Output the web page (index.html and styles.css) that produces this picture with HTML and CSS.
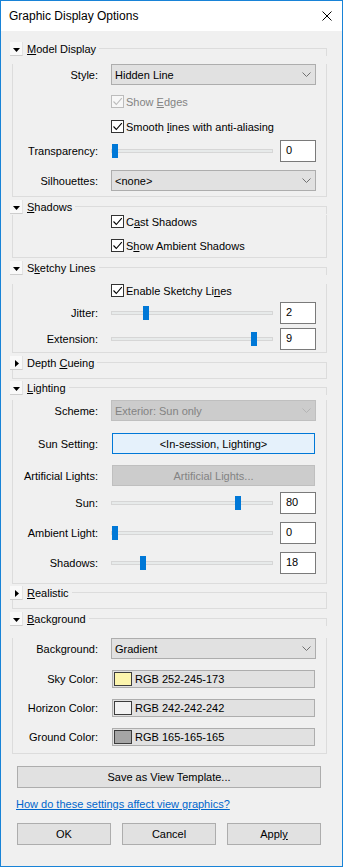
FILE: index.html
```html
<!DOCTYPE html>
<html>
<head>
<meta charset="utf-8">
<title>Graphic Display Options</title>
<link rel="stylesheet" href="styles.css">
</head>
<body>
<div class="window">
  <div class="titlebar">
    <span class="title">Graphic Display Options</span>
    <svg class="close" width="10" height="10" viewBox="0 0 10 10"><path d="M0.5 0.5L9.5 9.5M9.5 0.5L0.5 9.5" stroke="#000" stroke-width="1" fill="none"/></svg>
  </div>
  <div class="content">

    <section class="group">
      <div class="ghead">
        <span class="toggle"><svg width="13" height="14" viewBox="0 0 13 14"><path d="M4 6h7l-3.5 4z" fill="#000"/></svg></span>
        <span class="gtitle"><u>M</u>odel Display</span><span class="gline"></span>
      </div>
      <div class="gbody b-model">
        <div class="row r-style">
          <span class="lbl">Style:</span>
          <div class="combo"><span>Hidden Line</span><svg width="9" height="5" viewBox="0 0 9 5"><path d="M0.5 0.5L4.5 4.5L8.5 0.5" stroke="#707070" fill="none"/></svg></div>
        </div>
        <div class="row r-edges">
          <span class="lbl"></span>
          <div class="check disabled"><span class="cb"><svg width="11" height="11" viewBox="0 0 11 11"><path d="M1.5 5.5L4.3 8.5L9.8 2.2" stroke="#bcbcbc" stroke-width="1.1" fill="none"/></svg></span><span>Show <u>E</u>dges</span></div>
        </div>
        <div class="row r-smooth">
          <span class="lbl"></span>
          <div class="check"><span class="cb"><svg width="11" height="11" viewBox="0 0 11 11"><path d="M1.5 5.5L4.3 8.5L9.8 2.2" stroke="#000" stroke-width="1.1" fill="none"/></svg></span><span>Smooth <u>l</u>ines with anti-aliasing</span></div>
        </div>
        <div class="row r-transp">
          <span class="lbl">Transparency:</span>
          <div class="sliderctl"><div class="slider"><span class="track"></span><span class="thumb" style="left:1px"></span></div><span class="num">0</span></div>
        </div>
        <div class="row r-silh">
          <span class="lbl">Silhouettes:</span>
          <div class="combo"><span>&lt;none&gt;</span><svg width="9" height="5" viewBox="0 0 9 5"><path d="M0.5 0.5L4.5 4.5L8.5 0.5" stroke="#707070" fill="none"/></svg></div>
        </div>
      </div>
    </section>

    <section class="group">
      <div class="ghead">
        <span class="toggle"><svg width="13" height="14" viewBox="0 0 13 14"><path d="M4 6h7l-3.5 4z" fill="#000"/></svg></span>
        <span class="gtitle"><u>S</u>hadows</span><span class="gline"></span>
      </div>
      <div class="gbody b-shadows">
        <div class="row r-cast">
          <span class="lbl"></span>
          <div class="check"><span class="cb"><svg width="11" height="11" viewBox="0 0 11 11"><path d="M1.5 5.5L4.3 8.5L9.8 2.2" stroke="#000" stroke-width="1.1" fill="none"/></svg></span><span>C<u>a</u>st Shadows</span></div>
        </div>
        <div class="row r-amb">
          <span class="lbl"></span>
          <div class="check"><span class="cb"><svg width="11" height="11" viewBox="0 0 11 11"><path d="M1.5 5.5L4.3 8.5L9.8 2.2" stroke="#000" stroke-width="1.1" fill="none"/></svg></span><span>S<u>h</u>ow Ambient Shadows</span></div>
        </div>
      </div>
    </section>

    <section class="group">
      <div class="ghead">
        <span class="toggle"><svg width="13" height="14" viewBox="0 0 13 14"><path d="M4 6h7l-3.5 4z" fill="#000"/></svg></span>
        <span class="gtitle">S<u>k</u>etchy Lines</span><span class="gline"></span>
      </div>
      <div class="gbody b-sketchy">
        <div class="row r-enable">
          <span class="lbl"></span>
          <div class="check"><span class="cb"><svg width="11" height="11" viewBox="0 0 11 11"><path d="M1.5 5.5L4.3 8.5L9.8 2.2" stroke="#000" stroke-width="1.1" fill="none"/></svg></span><span>Enable Sketchy Li<u>n</u>es</span></div>
        </div>
        <div class="row r-jitter">
          <span class="lbl">Jitter:</span>
          <div class="sliderctl"><div class="slider"><span class="track"></span><span class="thumb" style="left:32px"></span></div><span class="num">2</span></div>
        </div>
        <div class="row r-ext">
          <span class="lbl">Extension:</span>
          <div class="sliderctl"><div class="slider"><span class="track"></span><span class="thumb" style="left:140px"></span></div><span class="num">9</span></div>
        </div>
      </div>
    </section>

    <section class="group">
      <div class="ghead">
        <span class="toggle"><svg width="13" height="14" viewBox="0 0 13 14"><path d="M6 4v7l4-3.5z" fill="#000"/></svg></span>
        <span class="gtitle">Depth <u>C</u>ueing</span><span class="gline"></span>
      </div>
      <div class="gbody collapsed"></div>
    </section>

    <section class="group tight">
      <div class="ghead">
        <span class="toggle"><svg width="13" height="14" viewBox="0 0 13 14"><path d="M4 6h7l-3.5 4z" fill="#000"/></svg></span>
        <span class="gtitle"><u>L</u>ighting</span><span class="gline"></span>
      </div>
      <div class="gbody b-lighting">
        <div class="row r-scheme">
          <span class="lbl">Scheme:</span>
          <div class="combo disabled"><span>Exterior: Sun only</span><svg width="9" height="5" viewBox="0 0 9 5"><path d="M0.5 0.5L4.5 4.5L8.5 0.5" stroke="#b4b4b4" fill="none"/></svg></div>
        </div>
        <div class="row r-sunset">
          <span class="lbl">Sun Setting:</span>
          <div class="btn focus">&lt;In-session, Lighting&gt;</div>
        </div>
        <div class="row r-art">
          <span class="lbl">Artificial Lights:</span>
          <div class="btn disabled">Artificial Lights...</div>
        </div>
        <div class="row r-sun">
          <span class="lbl">Sun:</span>
          <div class="sliderctl"><div class="slider"><span class="track"></span><span class="thumb" style="left:124px"></span></div><span class="num">80</span></div>
        </div>
        <div class="row r-ambl">
          <span class="lbl">Ambient Light:</span>
          <div class="sliderctl"><div class="slider"><span class="track"></span><span class="thumb" style="left:1px"></span></div><span class="num">0</span></div>
        </div>
        <div class="row r-shd">
          <span class="lbl">Shadows:</span>
          <div class="sliderctl"><div class="slider"><span class="track"></span><span class="thumb" style="left:29px"></span></div><span class="num">18</span></div>
        </div>
      </div>
    </section>

    <section class="group tight">
      <div class="ghead">
        <span class="toggle"><svg width="13" height="14" viewBox="0 0 13 14"><path d="M6 4v7l4-3.5z" fill="#000"/></svg></span>
        <span class="gtitle"><u>R</u>ealistic</span><span class="gline"></span>
      </div>
      <div class="gbody collapsed"></div>
    </section>

    <section class="group">
      <div class="ghead">
        <span class="toggle"><svg width="13" height="14" viewBox="0 0 13 14"><path d="M4 6h7l-3.5 4z" fill="#000"/></svg></span>
        <span class="gtitle"><u>B</u>ackground</span><span class="gline"></span>
      </div>
      <div class="gbody b-bg">
        <div class="row r-bgcombo">
          <span class="lbl">Background:</span>
          <div class="combo"><span>Gradient</span><svg width="9" height="5" viewBox="0 0 9 5"><path d="M0.5 0.5L4.5 4.5L8.5 0.5" stroke="#707070" fill="none"/></svg></div>
        </div>
        <div class="row r-sky">
          <span class="lbl">Sky Color:</span>
          <div class="colorfield"><span class="swatch sky"></span><span>RGB 252-245-173</span></div>
        </div>
        <div class="row r-hor">
          <span class="lbl">Horizon Color:</span>
          <div class="colorfield"><span class="swatch horizon"></span><span>RGB 242-242-242</span></div>
        </div>
        <div class="row r-gnd">
          <span class="lbl">Ground Color:</span>
          <div class="colorfield"><span class="swatch ground"></span><span>RGB 165-165-165</span></div>
        </div>
      </div>
    </section>

    <div class="btn wide">Save as View Template...</div>
    <a class="help" href="#">How do these settings affect view graphics?</a>
    <div class="actions">
      <div class="btn">OK</div>
      <div class="btn">Cancel</div>
      <div class="btn">Appl<u>y</u></div>
    </div>
  </div>
</div>
</body>
</html>
```

FILE: styles.css
```css
* { box-sizing: border-box; }
html, body { margin: 0; padding: 0; background: #fff; }
body {
  font-family: "Liberation Sans", Arial, sans-serif;
  font-size: 11px;
  color: #000;
}
u { text-decoration: underline; text-underline-offset: 1px; }

.window {
  width: 343px;
  height: 867px;
  border: 1px solid #1883d7;
  background: #f0f0f0;
  display: flex;
  flex-direction: column;
}
.titlebar {
  height: 30px;
  flex: none;
  background: #fff;
  display: flex;
  align-items: center;
  justify-content: space-between;
  padding: 0 10px 0 8px;
}
.title { font-size: 12px; }
.close { display: block; }

.content {
  padding: 11px 15px 0 9px;
}

/* group boxes */
.group + .group { margin-top: 3px; }
.group.tight { margin-top: 2px; }
.ghead {
  display: flex;
  height: 14px;
}
.toggle {
  flex: none;
  width: 13px;
  height: 14px;
  background: #f9f9f9;
  border-right: 1px solid #e3e3e3;
  border-bottom: 1px solid #cdcdcd;
}
.toggle svg { display: block; margin-left: -1px; }
.gtitle {
  margin-left: 4px;
  line-height: 14px;
  white-space: nowrap;
}
.gline {
  flex: 1;
  margin-left: 3px;
  margin-top: 6px;
  border-top: 1px solid #dcdcdc;
  border-right: 1px solid #dcdcdc;
}
.gbody {
  margin-left: 2px;
  border: 1px solid #dcdcdc;
  border-top: none;
}
.gbody.collapsed { height: 9px; }
.b-model { padding-bottom: 5px; }
.b-shadows { padding-bottom: 5px; }
.b-sketchy { padding-bottom: 2px; }
.b-lighting { padding-bottom: 9px; }
.b-bg { padding-bottom: 7px; }

/* rows */
.row {
  display: grid;
  grid-template-columns: 85px 205px;
  column-gap: 13px;
  align-items: center;
}
.lbl {
  text-align: right;
  white-space: nowrap;
  line-height: 14px;
}
.r-style { margin-top: 8px; height: 21px; }
.r-edges { margin-top: 10px; height: 13px; }
.r-smooth { margin-top: 12px; height: 13px; }
.r-transp { margin-top: 7px; height: 22px; }
.r-silh { margin-top: 8px; height: 21px; }
.r-cast { margin-top: 1px; height: 13px; }
.r-amb { margin-top: 11px; height: 13px; }
.r-enable { margin-top: 9px; height: 13px; }
.r-jitter { margin-top: 5px; height: 22px; }
.r-ext { margin-top: 4px; height: 22px; }
.r-scheme { margin-top: 5px; height: 21px; }
.r-sunset { margin-top: 12px; height: 21px; }
.r-art { margin-top: 11px; height: 21px; }
.r-sun { margin-top: 6px; height: 22px; }
.r-ambl { margin-top: 8px; height: 22px; }
.r-shd { margin-top: 8px; height: 22px; }
.r-bgcombo { margin-top: 12px; height: 21px; }
.r-sky { margin-top: 11px; height: 18px; }
.r-hor { margin-top: 11px; height: 18px; }
.r-gnd { margin-top: 11px; height: 18px; }

/* combo box */
.combo {
  height: 21px;
  background: #e1e1e1;
  border: 1px solid #adadad;
  display: flex;
  align-items: center;
  justify-content: space-between;
  padding: 0 4px 0 3px;
}
.combo svg { display: block; }
.combo.disabled {
  background: #cccccc;
  border-color: #bfbfbf;
  color: #838383;
}

/* checkbox */
.check {
  display: flex;
  align-items: center;
  height: 13px;
  white-space: nowrap;
}
.cb {
  flex: none;
  width: 13px;
  height: 13px;
  border: 1px solid #333;
  background: #fff;
  margin-right: 2px;
}
.cb svg { display: block; }
.check.disabled { color: #838383; }
.check.disabled .cb { border-color: #bcbcbc; background: #f7f7f7; }

/* slider */
.sliderctl {
  display: flex;
  align-items: center;
  height: 22px;
}
.slider {
  position: relative;
  width: 161px;
  height: 22px;
  flex: none;
}
.track {
  position: absolute;
  left: 0;
  right: -1px;
  top: 9px;
  height: 4px;
  background: #e7eaea;
  border: 1px solid #d6d6d6;
}
.thumb {
  position: absolute;
  top: 4px;
  width: 6px;
  height: 14px;
  background: #0078d7;
}
.num {
  margin-left: 8px;
  width: 36px;
  height: 22px;
  background: #fff;
  border: 1px solid #7a7a7a;
  padding-left: 5px;
  line-height: 19px;
}

/* buttons */
.btn {
  height: 21px;
  background: #e1e1e1;
  border: 1px solid #adadad;
  display: flex;
  align-items: center;
  justify-content: center;
  white-space: nowrap;
}
.row .btn { margin: 0 1px; }
.btn.focus {
  background: #e5f1fb;
  border-color: #0078d7;
}
.btn.disabled {
  background: #cccccc;
  border-color: #bfbfbf;
  color: #838383;
}
.btn.wide {
  height: 22px;
  margin: 12px 6px 0 7px;
}

/* color fields */
.colorfield {
  height: 18px;
  margin: 0 1px;
  background: #e1e1e1;
  border: 1px solid #adadad;
  display: flex;
  align-items: center;
  padding-left: 1px;
}
.swatch {
  width: 18px;
  height: 14px;
  border: 1px solid #3c3c3c;
  margin-right: 3px;
}
.swatch.sky { background: rgb(252, 245, 173); }
.swatch.horizon { background: rgb(242, 242, 242); }
.swatch.ground { background: rgb(165, 165, 165); }

.help {
  display: block;
  margin: 9px 0 0 6px;
  line-height: 15px;
  color: #0066cc;
  text-decoration: underline;
}
.actions {
  display: flex;
  gap: 11px;
  margin: 11px 0 0 7px;
}
.actions .btn {
  width: 94px;
  height: 22px;
}
```
